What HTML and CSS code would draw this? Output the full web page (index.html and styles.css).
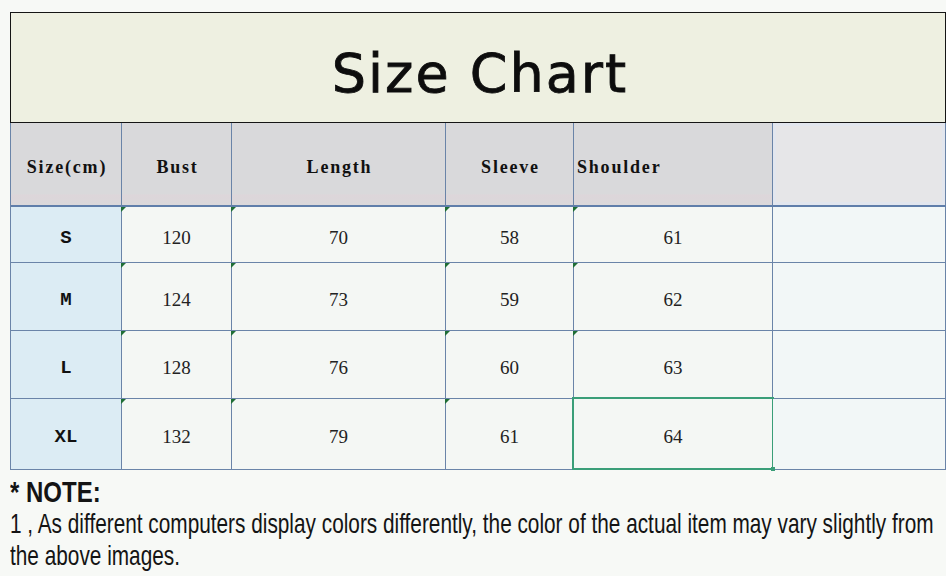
FILE: index.html
```html
<!DOCTYPE html>
<html lang="en">
<head>
<meta charset="utf-8">
<title>Size Chart</title>
<link rel="stylesheet" href="styles.css">
</head>
<body>
<div class="page">
  <div class="title"><h1>Size Chart</h1></div>
  <div class="grid">
    <div class="cell head">Size(cm)</div>
    <div class="cell head">Bust</div>
    <div class="cell head">Length</div>
    <div class="cell head">Sleeve</div>
    <div class="cell head start">Shoulder</div>
    <div class="cell head blank"></div>

    <div class="cell size">S</div>
    <div class="cell num mark">120</div>
    <div class="cell num mark">70</div>
    <div class="cell num mark">58</div>
    <div class="cell num mark">61</div>
    <div class="cell num empty"></div>

    <div class="cell size">M</div>
    <div class="cell num mark">124</div>
    <div class="cell num mark">73</div>
    <div class="cell num mark">59</div>
    <div class="cell num mark">62</div>
    <div class="cell num empty"></div>

    <div class="cell size">L</div>
    <div class="cell num mark">128</div>
    <div class="cell num mark">76</div>
    <div class="cell num mark">60</div>
    <div class="cell num mark">63</div>
    <div class="cell num empty"></div>

    <div class="cell size">XL</div>
    <div class="cell num mark">132</div>
    <div class="cell num mark">79</div>
    <div class="cell num mark">61</div>
    <div class="cell num selected">64</div>
    <div class="cell num empty"></div>
  </div>
  <div class="note">
    <div class="note-title"><span>* NOTE:</span></div>
    <div class="note-line"><span>1 , As different computers display colors differently, the color of the actual item may vary slightly from</span></div>
    <div class="note-line"><span>the above images.</span></div>
  </div>
</div>
</body>
</html>
```

FILE: styles.css
```css
* { box-sizing: border-box; }

html, body {
  margin: 0;
  padding: 0;
  background: #f7f9f6;
  overflow: hidden;
  height: 576px;
}

.page {
  padding: 12px 0 0 10px;
}

.title {
  width: 936px;
  height: 111px;
  border: 1px solid #151515;
  background: #eef0e1;
  display: flex;
  align-items: center;
  justify-content: center;
  padding: 12px 0 0 4px;
}

.title h1 {
  margin: 0;
  font-family: "DejaVu Sans", sans-serif;
  font-weight: normal;
  font-size: 54px;
  letter-spacing: 2px;
  color: #0d0d0d;
  line-height: 1;
  -webkit-text-stroke: 0.8px #0d0d0d;
}

.grid {
  display: grid;
  width: 936px;
  grid-template-columns: 111px 110px 214px 128px 199px 173px;
  grid-template-rows: 84px 56px 68px 68px 71px;
  border-left: 1px solid #6a84a8;
}

.cell {
  position: relative;
  border-right: 1px solid #6a84a8;
  border-bottom: 1px solid #6a84a8;
  display: flex;
  align-items: center;
  justify-content: center;
  padding-top: 4px;
}

.head {
  background: linear-gradient(#d9d9db 0, #d9d9db 86%, #ddd6da 88%, #dad8da 100%);
  border-bottom: 2px solid #5f7eaa;
  font-family: "Liberation Serif", serif;
  font-weight: bold;
  font-size: 18px;
  letter-spacing: 1.8px;
  color: #111;
  padding-top: 7px;
  padding-left: 2px;
}

.head.start {
  justify-content: flex-start;
  padding-left: 3px;
}

.head.blank {
  background: #e6e6e8;
  box-shadow: inset 0 0 0 3px #e2e6ee;
}

.size {
  background: #dcecf4;
  font-family: "Liberation Mono", monospace;
  font-weight: bold;
  font-size: 19px;
  color: #111;
  padding-top: 6px;
}

.num {
  background: #f4f7f4;
  font-family: "Liberation Serif", serif;
  font-size: 19px;
  color: #222;
  padding-top: 6px;
}

.empty {
  background: #f2f7f7;
}

.mark::before {
  content: "";
  position: absolute;
  top: 0;
  left: -1px;
  border-top: 5px solid #1f6e36;
  border-right: 5px solid transparent;
}

.selected::after {
  content: "";
  position: absolute;
  top: -2px;
  left: -2px;
  right: -2px;
  bottom: -1px;
  border: 2px solid #3a9e78;
}

.selected::before {
  content: "";
  position: absolute;
  right: -3px;
  bottom: -2px;
  width: 4px;
  height: 4px;
  background: #3a9e78;
  z-index: 1;
}

.note {
  margin-top: 6px;
  font-family: "Liberation Sans", Arial, sans-serif;
  color: #141414;
  white-space: nowrap;
}

.note-title {
  font-size: 24px;
  font-weight: bold;
  line-height: 32px;
}

.note-title span {
  display: inline-block;
  transform: scaleY(1.25);
}

.note-line {
  font-size: 20.8px;
  line-height: 32px;
}

.note-line span {
  display: inline-block;
  transform: scaleY(1.34);
}
```
